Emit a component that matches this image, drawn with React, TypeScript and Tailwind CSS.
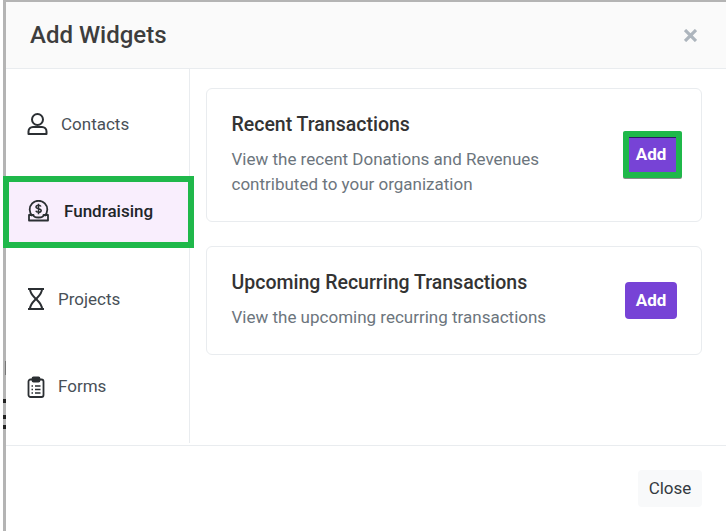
const font = { fontFamily: "Roboto, sans-serif" };

function Add({ highlighted }: { highlighted?: boolean }) {
  return highlighted ? (
    <button className="mb-[1px] mr-[-5px] flex h-[47px] w-[59px] shrink-0 items-center justify-center rounded-[2px] border-[6px] border-[#1fb84a] bg-[#7743d6] pr-[3px] text-[17px] font-bold text-white shadow-[0_1px_0_#8a8a8a,inset_0_1px_0_#2d1a66]">
      Add
    </button>
  ) : (
    <button className="flex h-[37px] w-[52px] shrink-0 items-center justify-center rounded-[4px] bg-[#7743d6] text-[17px] font-bold text-white">
      Add
    </button>
  );
}

function Person() {
  return (
    <svg width="22" height="24" viewBox="0 0 22 24" fill="none" stroke="#2b2f33" strokeWidth="2" strokeLinejoin="round">
      <circle cx="11.500" cy="6.500" r="5.500" />
      <path d="M2.500 21v-2.500c0-2.500 2-4.500 4.500-4.500h9c2.500 0 4.500 2 4.500 4.500V21z" />
    </svg>
  );
}

function Coin() {
  return (
    <svg width="24" height="24" viewBox="0 0 24 24" fill="none" stroke="#2b2f33" strokeWidth="1.800">
      <path d="M6.500 16a8.800 8.800 0 1 1 12 0" />
      <path d="M3 15h4.500c0 1.500 2 2.500 5 2.500s5-1 5-2.500H22v5.500H3z" strokeLinejoin="round" />
      <path d="M15 6.500c-.5-1-1.500-1.300-2.500-1.300-1.400 0-2.500.6-2.500 1.800 0 2.500 5.200 1 5.200 3.500 0 1.200-1.200 1.800-2.700 1.800-1.200 0-2.300-.5-2.700-1.500M12.500 3.800v10.500" strokeWidth="1.500" />
    </svg>
  );
}

function Hourglass() {
  return (
    <svg width="18" height="24" viewBox="0 0 18 24" fill="none" stroke="#2b2f33" strokeWidth="2">
      <path d="M1 1h16M1 21h16M3 1c0 4.500 3 7 6 10 3-3 6-5.500 6-10M3 21c0-4.500 3-7 6-10 3 3 6 5.500 6 10" />
    </svg>
  );
}

function Clip() {
  return (
    <svg width="18" height="22" viewBox="0 0 18 22" fill="none" stroke="#2b2f33" strokeWidth="1.800" strokeLinejoin="round">
      <rect x="1.500" y="3.500" width="15" height="17.500" rx="2" />
      <rect x="5.500" y="1.500" width="7" height="4" rx="1" fill="#2b2f33" />
      <path d="M4.500 10h1.500M8 10h5.500M4.500 13.500h1.500M8 13.500h5.500M4.500 17h1.500M8 17h5.500" strokeWidth="1.300" />
    </svg>
  );
}

export default function App() {
  return (
    <div style={font} className="relative h-[531px] w-[726px] overflow-hidden bg-white">
      <div className="absolute left-[3px] top-[399px] h-[4px] w-[3px] bg-[#222]" />
      <div className="absolute left-[3px] top-[415px] h-[4px] w-[3px] bg-[#222]" />
      <div className="absolute left-[3px] top-[425px] h-[4px] w-[3px] bg-[#222]" />
      <div className="absolute left-[5px] top-[361px] h-[14px] w-[1px] bg-[#777]" />
      <div className="ml-[3px] flex h-full flex-col border-l-[3px] border-t-2 border-[#b4b4b4]">
        <header className="flex h-[67px] shrink-0 items-center justify-between border-b border-[#e9ecef] bg-[#fafafa] pl-[24px] pr-[29px]">
          <h1 className="text-[24px] font-medium text-[#3d3d3d]">Add Widgets</h1>
          <svg width="13" height="13" viewBox="0 0 13 13" stroke="#adb5bd" strokeWidth="3.200"><path d="M1 1l11 11M12 1L1 12" /></svg>
        </header>
        <div className="flex h-[377px] shrink-0 border-b border-[#e9ecef]">
          <nav className="mb-[2px] flex w-[184px] shrink-0 flex-col gap-[27.500px] border-r border-[#e9ecef] pt-[25.500px] text-[17px]">
            <div className="flex h-[60px] items-center gap-[13px] pl-[20px] text-[#495057]">
              <Person /><span>Contacts</span>
            </div>
            <div className="z-10 ml-[3px] flex h-[60px] w-[179px] items-center gap-[14px] bg-[#f9eefd] pl-[17px] font-medium text-[#212529] outline-[6px] outline-[#1fb84a]">
              <Coin /><span>Fundraising</span>
            </div>
            <div className="flex h-[60px] items-center gap-[13px] pl-[21px] text-[#495057]">
              <Hourglass /><span>Projects</span>
            </div>
            <div className="flex h-[60px] items-center gap-[13px] pl-[21px] text-[#495057]">
              <Clip /><span>Forms</span>
            </div>
          </nav>
          <main className="flex flex-1 flex-col gap-[24px] pl-[16px] pr-[24px] pt-[19px]">
            <section className="flex h-[134px] items-center justify-between rounded-[6px] border border-[#e9ecef] pl-[24.500px] pr-[24px]">
              <div>
                <h2 className="text-[19.500px] font-medium leading-[24px] text-[#333333]">Recent Transactions</h2>
                <p className="mt-[10px] w-[320px] text-[17px] leading-[25px] text-[#6c757d]">View the recent Donations and Revenues contributed to your organization</p>
              </div>
              <Add highlighted />
            </section>
            <section className="flex h-[109px] items-center justify-between rounded-[6px] border border-[#e9ecef] pl-[24.500px] pr-[24px]">
              <div>
                <h2 className="text-[19.500px] font-medium leading-[24px] text-[#333333]">Upcoming Recurring Transactions</h2>
                <p className="mt-[10px] text-[17px] leading-[25px] text-[#6c757d]">View the upcoming recurring transactions</p>
              </div>
              <Add />
            </section>
          </main>
        </div>
        <footer className="flex flex-1 items-start justify-end pr-[24px] pt-[24px]">
          <button className="h-[37px] w-[64px] rounded-[4px] bg-[#f8f9fa] text-[17px] text-[#343a40]">Close</button>
        </footer>
      </div>
    </div>
  );
}
